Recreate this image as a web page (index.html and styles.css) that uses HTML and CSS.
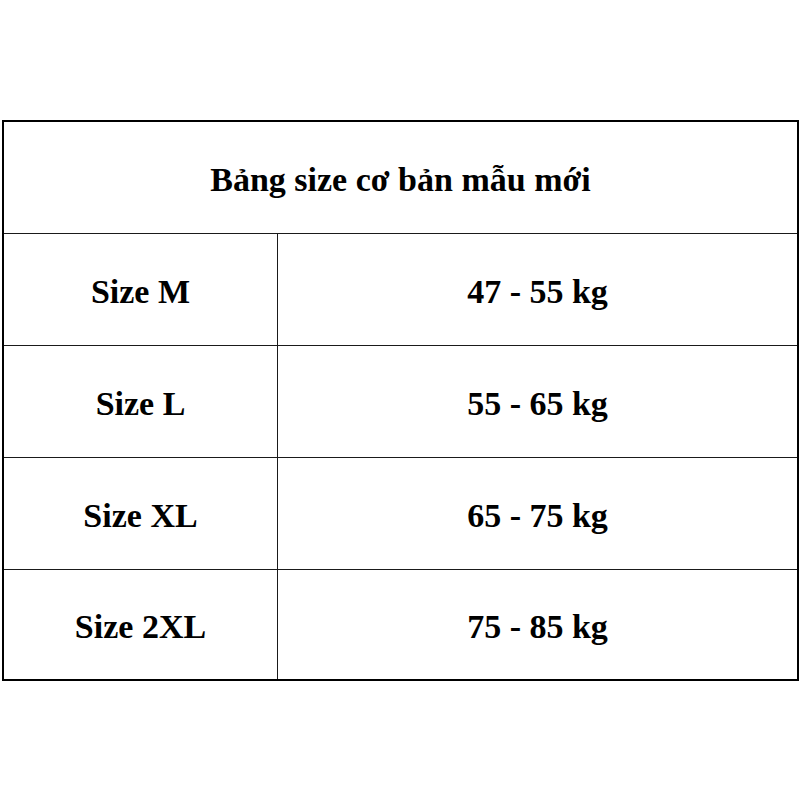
FILE: index.html
```html
<!DOCTYPE html>
<html lang="vi">
<head>
<meta charset="utf-8">
<title>Bảng size</title>
<link rel="stylesheet" href="styles.css">
</head>
<body>
<div class="sheet">
  <div class="size-table">
    <div class="cell title">Bảng size cơ bản mẫu mới</div>
    <div class="cell">Size M</div>
    <div class="cell">47 - 55 kg</div>
    <div class="cell">Size L</div>
    <div class="cell">55 - 65 kg</div>
    <div class="cell">Size XL</div>
    <div class="cell">65 - 75 kg</div>
    <div class="cell">Size 2XL</div>
    <div class="cell">75 - 85 kg</div>
  </div>
</div>
</body>
</html>
```
FILE: styles.css
```css
html, body {
  margin: 0;
  padding: 0;
  background: #fff;
}
.sheet {
  padding: 120px 0 0 2px;
}
.size-table {
  width: 797px;
  box-sizing: border-box;
  border: 2px solid #000;
  display: grid;
  grid-template-columns: 273px 519px;
  grid-template-rows: 111px 111px 111px 111px 109px;
  gap: 1px;
  background: #1a1a1a;
}
.cell {
  background: #fff;
  display: flex;
  align-items: center;
  justify-content: center;
  padding-top: 4px;
  font-family: "Liberation Serif", "Times New Roman", serif;
  font-weight: bold;
  font-size: 34px;
  color: #000;
}
.title {
  grid-column: 1 / 3;
  padding-top: 5px;
}
```
